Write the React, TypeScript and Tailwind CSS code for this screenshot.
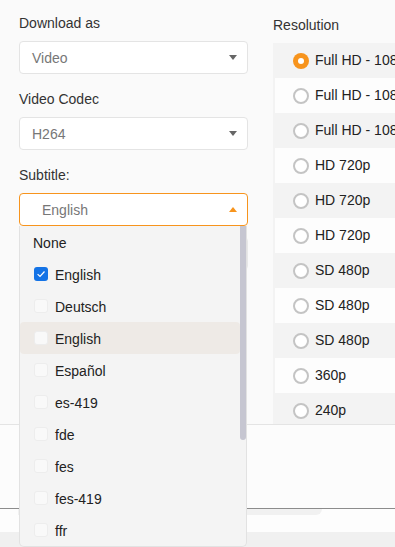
import React from 'react';

const subtitleOptions = [
  { label: 'None', box: false },
  { label: 'English', box: true, checked: true },
  { label: 'Deutsch', box: true },
  { label: 'English', box: true, hover: true },
  { label: 'Español', box: true },
  { label: 'es-419', box: true },
  { label: 'fde', box: true },
  { label: 'fes', box: true },
  { label: 'fes-419', box: true },
  { label: 'ffr', box: true },
];

const resolutions = [
  'Full HD - 1080p',
  'Full HD - 1080p',
  'Full HD - 1080p',
  'HD 720p',
  'HD 720p',
  'HD 720p',
  'SD 480p',
  'SD 480p',
  'SD 480p',
  '360p',
  '240p',
];

function Caret({ up }: { up?: boolean }) {
  if (up) {
    return <span className="w-0 h-0 border-x-[4px] border-x-transparent border-b-[5px] border-b-[#f7941d]" />;
  }
  return <span className="w-0 h-0 border-x-[4px] border-x-transparent border-t-[5px] border-t-[#666]" />;
}

function Select({ value }: { value: string }) {
  return (
    <div className="mt-[9px] h-[33px] rounded-[4px] border border-[#e4e4e4] bg-white flex items-center pl-[12px] pr-[10px] text-[#777]">
      <span className="flex-1 pt-[2px]">{value}</span>
      <Caret />
    </div>
  );
}

function Checkbox({ checked }: { checked?: boolean }) {
  if (checked) {
    return (
      <span className="w-[14px] h-[14px] rounded-[3px] bg-[#1473e6] flex items-center justify-center">
        <svg width="10" height="10" viewBox="0 0 10 10">
          <path d="M1.6 5.1 L4 7.4 L8.5 2.5" fill="none" stroke="white" strokeWidth="1.2" />
        </svg>
      </span>
    );
  }
  return <span className="w-[14px] h-[14px] rounded-[3px] bg-[#f9f9f9] border border-[#ededed]" />;
}

function Radio({ checked }: { checked?: boolean }) {
  if (checked) {
    return (
      <span className="w-[16px] h-[16px] rounded-full bg-[#f7941d] flex items-center justify-center">
        <span className="w-[6px] h-[6px] rounded-full bg-white" />
      </span>
    );
  }
  return <span className="w-[16px] h-[16px] rounded-full bg-white border-2 border-[#c4c4c4]" />;
}

export default function App() {
  return (
    <div className="relative w-[395px] h-[547px] overflow-hidden bg-[#fafafa] text-[14px] text-[#333] font-['Liberation_Sans',Arial,sans-serif]">
      <div className="h-[424px] flex">
        {/* left form */}
        <div className="ml-[19px] w-[229px] shrink-0 pt-[14px] flex flex-col">
          <label className="h-[18px] leading-[18px]">Download as</label>
          <Select value="Video" />

          <label className="mt-[16px] h-[18px] leading-[18px]">Video Codec</label>
          <Select value="H264" />

          <label className="mt-[16px] h-[18px] leading-[18px]">Subtitle:</label>
          <div className="relative mt-[9px]">
            <div className="h-[33px] rounded-[4px] border border-[#f7941d] bg-white flex items-center pl-[22px] pr-[10px] text-[#777]">
              <span className="flex-1 pt-[2px]">English</span>
              <Caret up />
            </div>

            {/* options list */}
            <div className="absolute z-10 left-0 top-[33px] w-[228px] h-[321px] overflow-hidden rounded-b-[5px] border border-t-0 border-[#e2e2e2] bg-[#f4f4f4]">
              <div className="pr-[6px]">
                {subtitleOptions.map((opt, i) => (
                  <div
                    key={i}
                    className={
                      'h-[32px] flex items-center rounded-[4px] text-[#222] ' +
                      (opt.hover ? 'bg-[#eeeae6]' : '') +
                      (opt.box ? ' pl-[14px] gap-[7px]' : ' pl-[13px]')
                    }
                  >
                    {opt.box && <Checkbox checked={opt.checked} />}
                    <span className="pt-[2px]">{opt.label}</span>
                  </div>
                ))}
              </div>
              <div className="absolute right-0 top-0 w-[6px] h-[214px] rounded-b-[3px] bg-[#c6c6d1]" />
            </div>
          </div>
          {/* field hidden under the list */}
          <div className="mt-[11px] h-[33px] rounded-[4px] border border-[#e8e8e8] bg-white" />
        </div>

        {/* resolution column */}
        <div className="ml-[25px] w-[200px] shrink-0 pt-[16px] overflow-hidden">
          <div className="h-[18px] leading-[18px] whitespace-nowrap">Resolution</div>
          <div className="mt-[9px] bg-[#f3f3f3] pl-[2px]">
            {resolutions.map((r, i) => (
              <div
                key={i}
                className={
                  'h-[35px] flex items-center gap-[6px] pl-[18px] text-[#222] whitespace-nowrap ' +
                  (i % 2 === 1 ? 'bg-[#fdfdfd]' : '')
                }
              >
                <Radio checked={i === 0} />
                <span>{r}</span>
              </div>
            ))}
          </div>
        </div>
      </div>

      {/* footer */}
      <div className="h-[84px] border-t border-[#e4e4e4] bg-[#fcfcfc]" />
      <div className="relative h-[24px] border-t border-[#8c8c8c] bg-[#fdfdfd]">
        <div className="absolute left-[18px] top-0 w-px h-[4px] bg-[#7a5a50]" />
        <div className="absolute left-[18px] top-0 w-[304px] h-[6px] rounded-br-[10px] bg-[#f1f1f1]" />
      </div>
      <div className="h-[20px] bg-[#f0f0f0]" />
    </div>
  );
}
